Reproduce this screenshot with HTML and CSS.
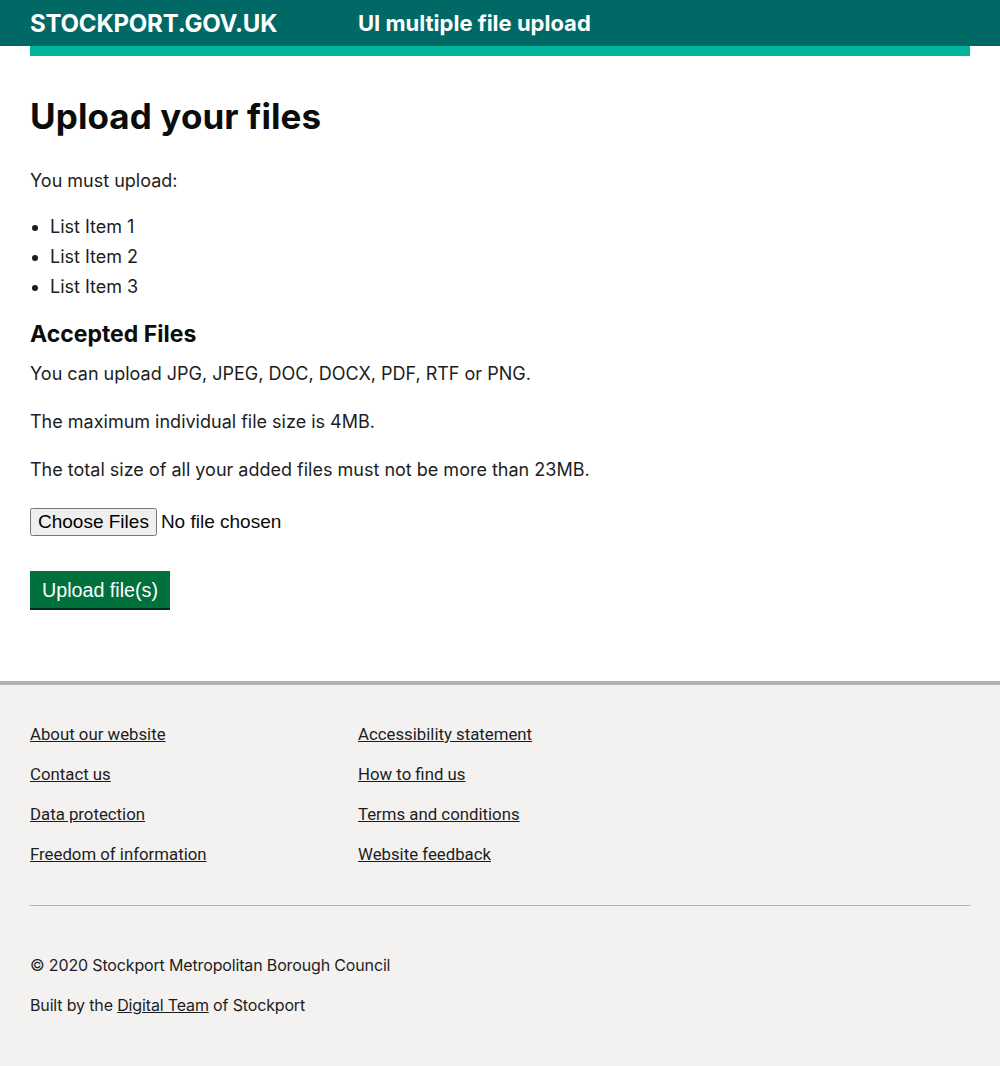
FILE: index.html
```html
<!DOCTYPE html>
<html lang="en">
<head>
<meta charset="utf-8">
<title>UI multiple file upload</title>
<link rel="stylesheet" href="styles.css">
</head>
<body>
<header class="site-header">
  <div class="header-inner">
    <a class="logo" href="#">STOCKPORT.GOV.UK</a>
    <span class="service-name">UI multiple file upload</span>
  </div>
</header>
<div class="width-container">
  <div class="accent-bar"></div>
  <main class="main">
    <h1 class="heading-xl">Upload your files</h1>
    <p class="body body-lead">You must upload:</p>
    <ul class="bullets">
      <li>List Item 1</li>
      <li>List Item 2</li>
      <li>List Item 3</li>
    </ul>
    <h2 class="heading-m">Accepted Files</h2>
    <p class="body">You can upload JPG, JPEG, DOC, DOCX, PDF, RTF or PNG.</p>
    <p class="body">The maximum individual file size is 4MB.</p>
    <p class="body">The total size of all your added files must not be more than 23MB.</p>
    <div class="file-row"><input class="file-input" type="file" multiple></div>
    <button class="button" type="button">Upload file(s)</button>
  </main>
</div>
<footer class="footer">
  <div class="footer-inner">
    <ul class="footer-links">
      <li><a href="#">About our website</a></li>
      <li><a href="#">Accessibility statement</a></li>
      <li><a href="#">Contact us</a></li>
      <li><a href="#">How to find us</a></li>
      <li><a href="#">Data protection</a></li>
      <li><a href="#">Terms and conditions</a></li>
      <li><a href="#">Freedom of information</a></li>
      <li><a href="#">Website feedback</a></li>
    </ul>
    <hr class="footer-rule">
    <p class="footer-text">© 2020 Stockport Metropolitan Borough Council</p>
    <p class="footer-text">Built by the <a href="#">Digital Team</a> of Stockport</p>
  </div>
</footer>
</body>
</html>
```

FILE: styles.css
```css
* { box-sizing: border-box; }
html, body { margin: 0; padding: 0; }
body {
  font-family: "Inter", "Noto Sans", sans-serif;
  color: #0b0c0c;
  background: #f3f2f1;
}
.site-header { background: #006865; height: 46px; }
.header-inner {
  padding: 0 30px;
  display: flex;
  align-items: center;
  height: 46px;
}
.logo {
  color: #fff;
  text-decoration: none;
  font-weight: 700;
  font-size: 24px;
  letter-spacing: -0.2px;
  width: 328px;
}
.service-name {
  color: #fff;
  font-weight: 700;
  font-size: 22px;
  letter-spacing: 0;
}
.width-container { padding: 0 30px; background: #fff; }
.accent-bar { height: 10px; background: #00b59c; }
.main { padding: 40px 0 73px; }
.heading-xl {
  font-size: 35px;
  font-weight: 700;
  margin: 0 0 33px;
  line-height: 40px;
  letter-spacing: 0.1px;
}
.body {
  font-size: 18px;
  line-height: 24px;
  margin: 0 0 24px;
  color: #1d1d1d;
}
.body-lead { margin-bottom: 19px; }
.bullets {
  margin: 0 0 17px;
  padding-left: 20px;
  font-size: 18px;
  line-height: 30px;
  color: #1d1d1d;
}
.heading-m {
  font-size: 23px;
  font-weight: 700;
  line-height: 30px;
  margin: 0 0 13px;
}
.file-row { margin: 0 0 35px; padding-top: 2px; }
.file-input {
  font-family: "Liberation Sans", Arial, sans-serif;
  font-size: 19px;
  color: #0b0c0c;
}
.button {
  font-family: "Liberation Sans", Arial, sans-serif;
  font-size: 19.7px;
  color: #fff;
  background: #00703c;
  border: 0;
  padding: 1px 12px 0 12px;
  box-shadow: 0 2px 0 #002d18;
  line-height: 36px;
  height: 37px;
}
.footer {
  background: #f3f2f1;
  border-top: 4px solid #b1b4b6;
  padding: 39px 30px 32px;
}
.footer-links {
  list-style: none;
  margin: 0;
  padding: 0;
  display: grid;
  grid-template-columns: 328px 1fr;
  row-gap: 20px;
}
.footer-links li { line-height: 20px; font-size: 16.8px; }
.footer-links a {
  font-family: "Roboto", sans-serif;
  font-size: 16.8px;
  line-height: 20px;
  color: #1d1d1d;
}
.footer-rule {
  border: 0;
  border-top: 1px solid #b1b4b6;
  margin: 41px 0 49px;
}
.footer-text {
  font-size: 16px;
  line-height: 20px;
  margin: 0 0 20px;
  color: #1d1d1d;
  letter-spacing: -0.15px;
}
.footer-text a { color: #1d1d1d; }
```
